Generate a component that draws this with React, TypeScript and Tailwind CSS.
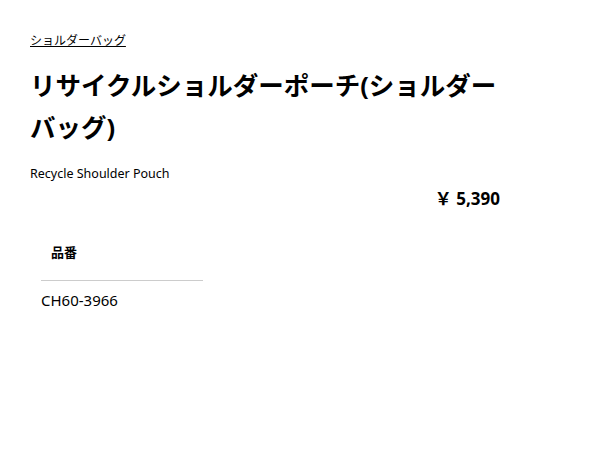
import React from "react";

export default function App() {
  return (
    <div className="w-[600px] h-[450px] bg-white text-black" style={{ fontFamily: '"Noto Sans", "Noto Sans CJK JP", sans-serif' }}>
      <div className="w-[470px] ml-[30px] pt-[33px]">
        <a className="text-[12px] leading-[16px] underline block">ショルダーバッグ</a>
        <h1 className="mt-[15px] text-[25.5px] font-bold leading-[42px]">リサイクルショルダーポーチ(ショルダーバッグ)</h1>
        <p className="mt-[18px] text-[12.5px] leading-[16px]">Recycle Shoulder Pouch</p>
        <div className="mt-[5px] text-right text-[17px] font-bold leading-[24px]">￥&nbsp;5,390</div>
        <div className="mt-[22px] ml-[11px] w-[162px]">
          <div className="px-[10px] pt-[10px] pb-[19px] text-[13px] font-bold leading-[18px] border-b border-[#cccccc]">品番</div>
          <div className="pt-[9px] text-[15px] leading-[20px]">CH60-3966</div>
        </div>
      </div>
    </div>
  );
}
